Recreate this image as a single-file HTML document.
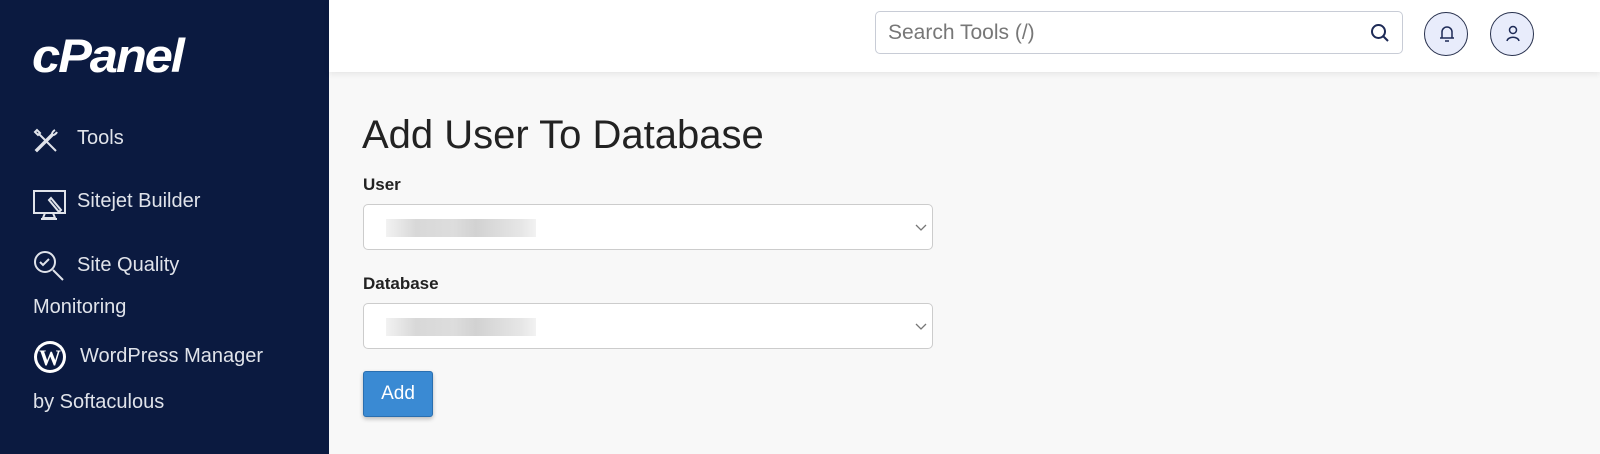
<!DOCTYPE html>
<html><head><meta charset="utf-8">
<style>
*{box-sizing:border-box;margin:0;padding:0}
body{width:1600px;height:454px;overflow:hidden;font-family:"Liberation Sans",sans-serif;background:#f8f8f8;position:relative}
.side{position:absolute;left:0;top:0;width:329px;height:454px;background:#0b1a40;color:#e4e6ec}
.logo{position:absolute;left:32px;top:28px;font:italic 900 47px "Liberation Sans",sans-serif;color:#fff;letter-spacing:-2px;transform:scaleX(1.08);transform-origin:left}
.item{position:absolute;left:33px;font-size:20px;color:#e0e3ea}
.item svg{position:absolute;left:0}
.hdr{position:absolute;left:329px;top:0;right:0;height:72px;background:#fff;box-shadow:0 2px 6px rgba(0,0,0,.08)}
.search{position:absolute;left:875px;top:11px;width:528px;height:43px;border:1px solid #c8ccd6;border-radius:5px;background:#fff;font-size:21px;color:#777;padding:9px 12px}
.circ{position:absolute;top:12px;width:44px;height:44px;border-radius:50%;border:1px solid #27304d;background:#e8ecfb}
h1{position:absolute;left:362px;top:113px;font-weight:400;font-size:40px;color:#222}
.lbl{position:absolute;left:363px;font-size:17px;font-weight:700;color:#222}
.sel{position:absolute;left:363px;width:570px;height:46px;border:1px solid #ccc;border-radius:5px;background:#fff}
.blur{position:absolute;left:22px;top:14px;width:150px;height:18px;background:linear-gradient(90deg,#f2f2f2,#d8d8d8 20%,#ddd 45%,#d2d2d2 60%,#e6e6e6 90%,#f2f2f2)}
.chev{position:absolute;right:4px;top:17px}
.btn{position:absolute;left:363px;top:371px;width:70px;height:46px;background:#3a8ad3;border:1px solid #2a6fb0;border-radius:3px;color:#fff;font-size:19px;text-align:center;line-height:44px;box-shadow:0 2px 4px rgba(0,0,0,.25)}
</style></head><body>
<div class="side">
<div class="logo">cPanel</div>
<div class="item" style="top:127px;padding-left:44px"><svg style="top:1px" width="26" height="26" viewBox="0 0 26 26" fill="none" stroke="#e0e3ea" stroke-width="2"><path d="M4 2l-2 2 3 3 2-2zM6 6l17 17M22 2c-2 1-3 3-3 4L3 22l1 1 16-16c1 0 3-1 4-3"/></svg>Tools</div>
<div class="item" style="top:190px;padding-left:44px"><svg style="top:0" width="34" height="32" viewBox="0 0 34 32" fill="none" stroke="#e0e3ea" stroke-width="2"><rect x="1" y="1" width="31" height="22"/><path d="M12 23l-2 5h12l-2-5M8 29h16M18 8l10 12-2 2-10-12z"/></svg>Sitejet Builder</div>
<div class="item" style="top:254px;padding-left:44px;line-height:42px;margin-top:-10px"><svg style="top:6px" width="34" height="34" viewBox="0 0 34 34" fill="none" stroke="#e0e3ea" stroke-width="2"><circle cx="12" cy="12" r="10"/><path d="M7 12l3 3 6-6M20 20l10 10"/></svg>Site Quality<br><span style="margin-left:-44px">Monitoring</span></div>
<div class="item" style="top:343px;padding-left:47px;line-height:46px;margin-top:-10px"><svg style="top:7px" width="34" height="34" viewBox="0 0 34 34"><circle cx="17" cy="17" r="16" fill="#fff"/><circle cx="17" cy="17" r="13" fill="#0b1a40"/><text x="17" y="25" font-size="22" font-weight="bold" text-anchor="middle" fill="#fff" font-family="Liberation Serif">W</text></svg>WordPress Manager<br><span style="margin-left:-47px">by Softaculous</span></div>
</div>
<div class="hdr"></div>
<div class="search">Search Tools (/)<svg style="position:absolute;right:12px;top:11px" width="20" height="20" viewBox="0 0 20 20" fill="none" stroke="#1d2a56" stroke-width="2"><circle cx="8.5" cy="8.5" r="6.5"/><path d="M13 13l5 5"/></svg></div>
<div class="circ" style="left:1424px"><svg style="position:absolute;left:14px;top:12px" width="16" height="18" viewBox="0 0 16 18" fill="none" stroke="#1d2a56" stroke-width="1.5"><path d="M3 13V7a5 5 0 0110 0v6M1 13h14M6 16h4"/></svg></div>
<div class="circ" style="left:1490px"><svg style="position:absolute;left:14px;top:12px" width="16" height="18" viewBox="0 0 16 18" fill="none" stroke="#1d2a56" stroke-width="1.5"><circle cx="8" cy="5" r="3.5"/><path d="M2 16c1-5 11-5 12 0"/></svg></div>
<h1>Add User To Database</h1>
<div class="lbl" style="top:175px">User</div>
<div class="sel" style="top:204px"><div class="blur"></div><svg class="chev" width="14" height="10" viewBox="0 0 14 10" fill="none" stroke="#777" stroke-width="1.3"><path d="M2 3l5 5 5-5"/></svg></div>
<div class="lbl" style="top:274px">Database</div>
<div class="sel" style="top:303px"><div class="blur"></div><svg class="chev" width="14" height="10" viewBox="0 0 14 10" fill="none" stroke="#777" stroke-width="1.3"><path d="M2 3l5 5 5-5"/></svg></div>
<div class="btn">Add</div>
</body></html>
